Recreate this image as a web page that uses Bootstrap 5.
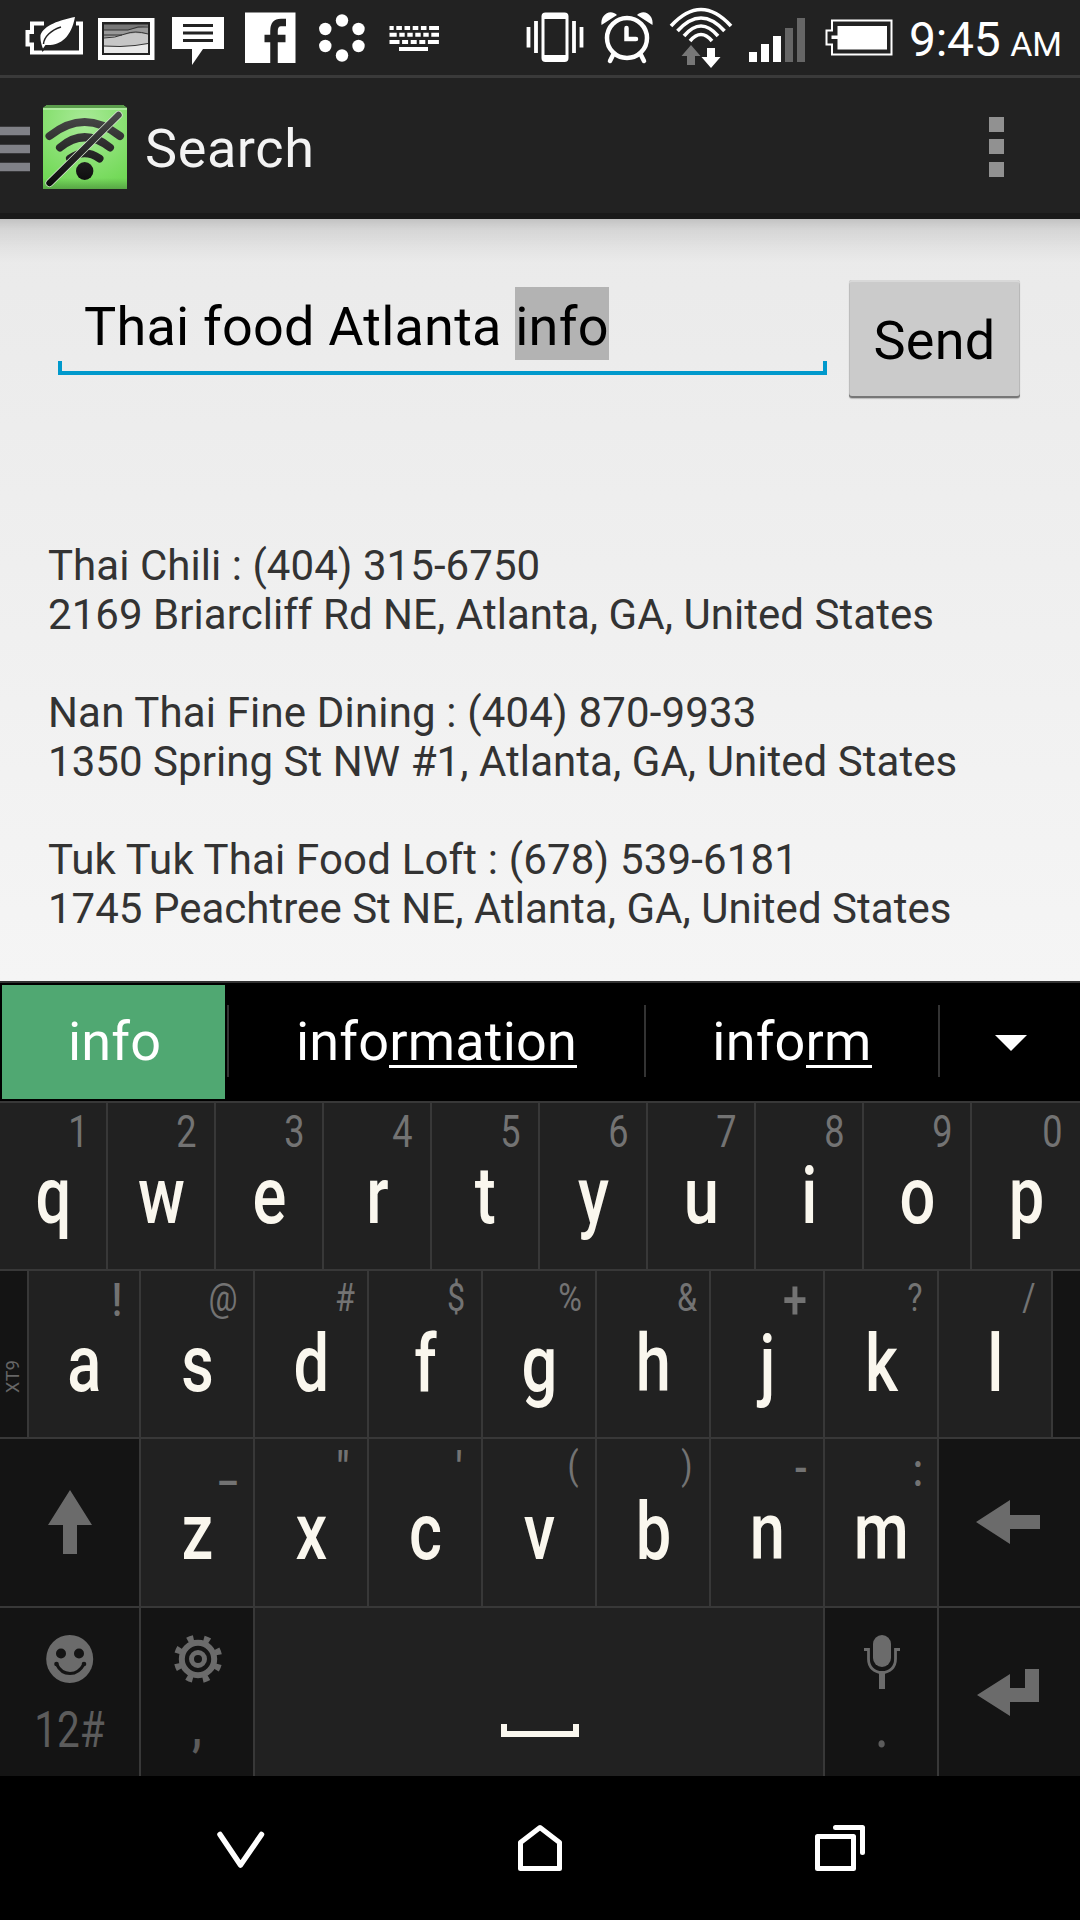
<!DOCTYPE html>
<html lang="en">
<head>
<meta charset="utf-8">
<meta name="viewport" content="width=device-width, initial-scale=1">
<title>Search</title>
<link href="https://cdn.jsdelivr.net/npm/bootstrap@5.3.0/dist/css/bootstrap.min.css" rel="stylesheet">
<style>
  body { width: 1080px; height: 1920px; overflow: hidden; background: #000; font-family: Roboto, "Liberation Sans", sans-serif; line-height: 1; }
  svg { display: block; flex: none; }
  .statusbar { height: 78px; background: #222; border-bottom: 3px solid #3a3a3a; padding-left: 24px; color: #fff; }
  .right-icons { margin-left: 66px; }
  .clock { font-size: 48px; line-height: 79px; margin-left: 7px; white-space: nowrap; letter-spacing: -.3px; }
  .ampm { font-size: 34px; margin-left: 10px; letter-spacing: -.2px; }
  .appbar { height: 141px; background: #222; border-bottom: 6px solid #1a1a1a; }
  .apptitle { font-size: 54px; color: #f3f3f3; line-height: 142px; margin-left: 15px; letter-spacing: .6px; }
  .page-area { height: 762px; background: linear-gradient(rgba(0,0,0,.17), rgba(0,0,0,.09) 10px, rgba(0,0,0,.035) 28px, rgba(0,0,0,0) 44px), linear-gradient(#eaeaea, #f5f5f5); }
  .search-row { padding: 61px 60px 0 58px; }
  .query { position: relative; width: 769px; height: 87px; margin-top: 8px; padding-left: 26px; font-size: 54px; line-height: 78px; color: #000; white-space: pre; letter-spacing: .22px; }
  .query::after { content: ""; position: absolute; left: 0; right: 0; bottom: 0; height: 14px; border: 4px solid #0099cc; border-top: 0; }
  .composing { background: #b3b3b3; padding: 8px 0 2px; }
  .send { width: 171px; height: 118px; border: 0; border-radius: 3px; background: #cbcbcb; color: #000; font-size: 54px; line-height: 117px; padding: 2px 0 0; letter-spacing: .3px; box-shadow: inset 0 -2px 0 #777, inset 0 2px 0 #d8d8d8, 0 1px 1px #bbb, inset -1px 0 #b8b8b8, inset 1px 0 #bdbdbd; }
  .results { padding: 143px 48px 0; font-size: 42px; line-height: 49px; color: #333; letter-spacing: .05px; }
  .results p { margin: 0 0 49px; white-space: nowrap; }
  .loose { letter-spacing: .16px; }
  .snug { letter-spacing: .02px; }
  .suggest { height: 122px; border-top: 2px solid #333; border-bottom: 2px solid #383838; background: #000; color: #fff; font-size: 54px; line-height: 118px; letter-spacing: .18px; }
  .pick { width: 223px; height: 114px; margin: 2px 2px 0; background: #50a872; line-height: 114px; padding-left: 2px; }
  .sep { width: 2px; height: 72px; margin-top: 22px; background: #333; }
  .ul { border-bottom: 3.500px solid #fff; display: inline-block; line-height: 54px; height: 53px; }
  .keyrow { border-bottom: 2px solid #383838; background: #212121; height: 168px; }
  .keyrow.tall { height: 169px; }
  .keyrow.last { border-bottom: 0; }
  .keycap { width: 114px; border-right: 2px solid #383838; }
  .r1 .keycap { width: 108px; }
  .r1 .keycap:last-child { border-right: 0; }
  .keycap.first { width: 112px; }
  .dark { background: #141414; }
  .hint { align-self: flex-end; width: 44px; height: 60px; font-size: 38px; line-height: 54px; color: #737373; text-align: center; transform: scaleX(.85); }
  .r1 .hint { width: 55px; font-size: 44px; line-height: 58px; transform: scaleX(.82); }
  .hint.wide { width: 60px; }
  .hint.plus { width: 56px; font-weight: 500; font-size: 54px; line-height: 58px; transform: scaleX(.8); }
  .hint.dollar { width: 50px; }
  .hint.low { width: 50px; font-weight: 500; font-size: 46px; line-height: 53px; }
  .hint.big { font-size: 46px; line-height: 58px; font-weight: 500; }
  .hint.quot { width: 48px; }
  .hint.colon { width: 38px; line-height: 62px; }
  .letter { font-size: 80px; line-height: 67px; color: #faf7ee; font-weight: 500; text-align: center; transform: scaleX(.79); height: 67px; padding-left: 1px; }
  .edgekey { width: 29px; border-right: 2px solid #383838; }
  .xt { writing-mode: vertical-rl; transform: rotate(180deg); font-size: 18px; color: #666; line-height: 26px; letter-spacing: .4px; padding-bottom: 90px; height: 168px; width: 27px; display: block; text-align: end; }
  .edgekey .xt { height: 166px; padding: 44px 0 0; text-align: start; }
  .fn { width: 141px; border-right: 2px solid #383838; }
  .navkeys { height: 144px; background: #000; }
  .alt { font-size: 50px; color: #5c5c5c; transform: scaleX(.81); line-height: 64px; text-align: center; white-space: nowrap; }
  .alt.heavy { font-weight: 700; line-height: 61px; }
  .alt.stop { font-weight: 500; font-size: 56px; line-height: 60px; padding-left: 2px; }
</style>
<script src="https://cdn.jsdelivr.net/npm/bootstrap@5.3.0/dist/js/bootstrap.bundle.min.js"></script>
</head>
<body class="d-flex flex-column m-0">

<header class="statusbar d-flex flex-shrink-0">
  <svg width="66" height="75" viewBox="24 0 66 75"><path d="M44 23.500H32V32H27.500V44.500H32V52.500H81V23.500H76" fill="none" stroke="#fff" stroke-width="4"/><path d="M75 17C60 20 44 25 40.500 35C40 41 42 46 43 48.500L45.500 45C60 46 71 38 75 17Z" fill="#fff" stroke="#222" stroke-width="3.500" paint-order="stroke"/><path d="M43.500 44C44 37 51 30 61 27" fill="none" stroke="#222" stroke-width="1.500"/></svg>
  <svg width="74" height="75" viewBox="90 0 74 75"><rect x="98" y="18" width="56.500" height="42" fill="#fff"/><rect x="102" y="22" width="48" height="33" fill="#222"/><rect x="104" y="24.500" width="44" height="28.500" fill="#777"/><path d="M104 30L128 30L148 26V53H104Z" fill="#999"/><path d="M104 37.500L135 33L148 34V53H104Z" fill="#c6c6c6"/><path d="M104 46.500L120 47L135 45L148 44V53H104Z" fill="#e8e8e8"/><path d="M104 30L128 30L138 27L148 27M104 38Q115 38 125 34T148 34M104 46L120 46.500L135 45.500L148 43.500M104 35L122 35" fill="none" stroke="#333" stroke-width="1"/></svg>
  <svg width="70" height="75" viewBox="164 0 70 75"><path d="M172 17H224V49H203L192 65V49H172Z" fill="#fff"/><path d="M183 25.500H213M183 33H213M183 40.500H213" stroke="#222" stroke-width="3"/></svg>
  <svg width="72" height="75" viewBox="234 0 72 75"><path d="M245 12.500H295.500V63H245Z" fill="#fff"/><path d="M274 63V31Q274 22.500 281 22.500H286M264.500 38.500H285.500" fill="none" stroke="#222" stroke-width="7.500"/></svg>
  <svg width="72" height="75" viewBox="306 0 72 75" fill="#fff"><circle cx="342" cy="20.500" r="6.200"/><circle cx="358.500" cy="29" r="6.200"/><circle cx="358.500" cy="46" r="6.200"/><circle cx="342" cy="55.500" r="6.200"/><circle cx="325.300" cy="46" r="6.200"/><circle cx="325.300" cy="29" r="6.200"/></svg>
  <svg width="72" height="75" viewBox="378 0 72 75" fill="none" stroke="#fff" stroke-width="4"><path d="M389.500 28H439" stroke-dasharray="4.200 2.600 5.600 2.600 5.600 2.600 5.600 2.600 5.600 2.600 9.900 9"/><path d="M389.500 34.700H439" stroke-dasharray="7.200 2.600 5.400 2.600 5.400 2.600 5.400 2.600 5.400 2.600 8 9"/><path d="M389.500 42H439" stroke-dasharray="10 2.600 6 2.600 6 2.600 6 2.600 11 9"/><path d="M399 49H428"/></svg>
  <svg class="right-icons" width="76" height="75" viewBox="516 0 76 75"><rect x="541.500" y="12.500" width="27" height="49.500" rx="4" fill="#fff"/><rect x="544.500" y="19" width="21" height="36" fill="#222"/><path d="M528.500 27V47.500M581.500 27V47.500M536 21V53M574 21V53" stroke="#fff" stroke-width="3.800"/></svg>
  <svg width="70" height="75" viewBox="592 0 70 75"><path d="M601.500 25C600 15 610 8 617 15Z M652.500 25C654 15 644 8 637 15Z" fill="#fff"/><circle cx="627" cy="38" r="20" fill="none" stroke="#fff" stroke-width="4.500"/><path d="M626.500 28V39H636" fill="none" stroke="#fff" stroke-width="4.500" stroke-linecap="round"/><path d="M613 55L610 61M641 55L644 61" stroke="#fff" stroke-width="4.500" stroke-linecap="round"/></svg>
  <svg width="78" height="75" viewBox="662 0 78 75"><g fill="none" stroke="#fff" stroke-width="3.600"><path d="M671 26Q701 -7 731 26"/><path d="M677.500 31Q701 5 724.500 31"/><path d="M684 36Q701 16 718 36"/><path d="M690 41Q701 28 712 41"/></g><path d="M691 45L700.500 56H695V65H687V56H681.500Z" fill="#777"/><path d="M711 68L720.500 57H715V48H707V57H701.500Z" fill="#fff"/></svg>
  <svg width="76" height="75" viewBox="740 0 76 75"><path d="M749 52h8v10h-8zM761 44h8v18h-8zM773 36h8v26h-8z" fill="#fff"/><path d="M785 28h8v34h-8zM797 18h8v44h-8z" fill="#666"/></svg>
  <svg width="86" height="75" viewBox="816 0 86 75"><path d="M832 20.500H891.500V54.500H832V44.500H826.500V30.500H832Z" fill="none" stroke="#fff" stroke-width="2"/><path d="M837.500 26H887V49.500H837.500V39H831.500V35.500H837.500Z" fill="#fff"/></svg>
  <span class="clock">9:45<span class="ampm">AM</span></span>
</header>

<nav class="appbar d-flex flex-shrink-0">
  <svg width="43" height="135" viewBox="0 78 43 135"><path d="M0 131H30M0 149H30M0 167H30" stroke="#808187" stroke-width="8.500"/></svg>
  <svg width="87" height="135" viewBox="43 78 87 135">
    <defs>
      <radialGradient id="tile" cx=".5" cy=".2" r=".8"><stop offset="0" stop-color="#a9ea98"/><stop offset="1" stop-color="#72d957"/></radialGradient>
      <linearGradient id="ink" gradientUnits="userSpaceOnUse" x1="0" y1="115" x2="0" y2="185"><stop offset="0" stop-color="#484848"/><stop offset="1" stop-color="#0a0a0a"/></linearGradient>
      <linearGradient id="foot" x1="0" y1="0" x2="0" y2="1"><stop offset="0" stop-color="#5aaa48" stop-opacity="0"/><stop offset="1" stop-color="#57a545"/></linearGradient>
    </defs>
    <path d="M43 108L47 105H123L127 108V189H43Z" fill="url(#tile)"/><path d="M43 108L47 105H123L127 108Z" fill="#5b9d4c"/><path d="M43 109H127" stroke="#b9efab" stroke-width="1.500"/><rect x="43" y="178" width="84" height="11" fill="url(#foot)"/>
    <g fill="none" stroke="url(#ink)" stroke-width="8" stroke-linecap="round"><path d="M49.500 136Q84.500 108 120 136"/><path d="M60 147.500Q84.500 127 110 147.500"/><path d="M70 158.500Q84.500 148 99.500 158.500"/></g>
    <ellipse cx="84.700" cy="171" rx="8.700" ry="9" fill="url(#ink)"/>
    <path d="M49.500 183L118.500 115" stroke="#d5e5d0" stroke-width="8" stroke-linecap="round"/><path d="M49.500 183L118.500 115" stroke="url(#ink)" stroke-width="6.400" stroke-linecap="round"/>
  </svg>
  <span class="apptitle">Search</span>
  <svg class="ms-auto" width="98" height="135" viewBox="982 78 98 135" fill="#919191"><path d="M989 117h15v15h-15zM989 139h15v15h-15zM989 162h15v15h-15z"/></svg>
</nav>

<main class="page-area flex-shrink-0">
  <div class="search-row d-flex justify-content-between">
    <div class="query">Thai food Atlanta <span class="composing">info</span></div>
    <button class="send" type="button">Send</button>
  </div>
  <div class="results">
    <p>Thai Chili : (404) 315-6750<br>2169 Briarcliff Rd NE, Atlanta, GA, United States</p>
    <p><span class="loose">Nan Thai Fine Dining : (404) 870-9933</span><br>1350 Spring St NW #1, Atlanta, GA, United States</p>
    <p><span class="loose">Tuk Tuk Thai Food Loft : (678) 539-6181</span><br><span class="snug">1745 Peachtree St NE, Atlanta, GA, United States</span></p>
  </div>
</main>

<section class="suggest d-flex flex-shrink-0 text-center">
  <div class="pick">info</div><div class="sep"></div>
  <div style="width:415px">info<span class="ul">rmation</span></div><div class="sep"></div>
  <div style="width:292px">info<span class="ul">rm</span></div><div class="sep"></div>
  <svg width="140" height="118" viewBox="940 983 140 118"><path d="M995 1035H1027L1011 1051Z" fill="#fff"/></svg>
</section>

<section class="flex-shrink-0">
  <div class="keyrow r1 d-flex">
    <div class="keycap d-flex flex-column"><span class="hint">1</span><span class="letter">q</span></div>
    <div class="keycap d-flex flex-column"><span class="hint">2</span><span class="letter">w</span></div>
    <div class="keycap d-flex flex-column"><span class="hint">3</span><span class="letter">e</span></div>
    <div class="keycap d-flex flex-column"><span class="hint">4</span><span class="letter">r</span></div>
    <div class="keycap d-flex flex-column"><span class="hint">5</span><span class="letter">t</span></div>
    <div class="keycap d-flex flex-column"><span class="hint">6</span><span class="letter">y</span></div>
    <div class="keycap d-flex flex-column"><span class="hint">7</span><span class="letter">u</span></div>
    <div class="keycap d-flex flex-column"><span class="hint">8</span><span class="letter">i</span></div>
    <div class="keycap d-flex flex-column"><span class="hint">9</span><span class="letter">o</span></div>
    <div class="keycap d-flex flex-column"><span class="hint">0</span><span class="letter">p</span></div>
  </div>
  <div class="keyrow d-flex">
    <div class="edgekey dark"><span class="xt">XT9</span></div>
    <div class="keycap first d-flex flex-column"><span class="hint big">!</span><span class="letter">a</span></div>
    <div class="keycap d-flex flex-column"><span class="hint wide">@</span><span class="letter">s</span></div>
    <div class="keycap d-flex flex-column"><span class="hint">#</span><span class="letter">d</span></div>
    <div class="keycap d-flex flex-column"><span class="hint dollar">$</span><span class="letter">f</span></div>
    <div class="keycap d-flex flex-column"><span class="hint dollar">%</span><span class="letter">g</span></div>
    <div class="keycap d-flex flex-column"><span class="hint">&amp;</span><span class="letter">h</span></div>
    <div class="keycap d-flex flex-column"><span class="hint plus">+</span><span class="letter">j</span></div>
    <div class="keycap d-flex flex-column"><span class="hint">?</span><span class="letter">k</span></div>
    <div class="keycap d-flex flex-column"><span class="hint">/</span><span class="letter">l</span></div>
    <div class="dark flex-fill"></div>
  </div>
  <div class="keyrow tall d-flex">
    <div class="fn dark"><svg width="139" height="167" viewBox="0 1439 139 167"><path d="M70 1490L92 1525H77V1554H63V1525H48Z" fill="#6b6b6b"/></svg></div>
    <div class="keycap d-flex flex-column"><span class="hint low">_</span><span class="letter">z</span></div>
    <div class="keycap d-flex flex-column"><span class="hint big quot">"</span><span class="letter">x</span></div>
    <div class="keycap d-flex flex-column"><span class="hint big">'</span><span class="letter">c</span></div>
    <div class="keycap d-flex flex-column"><span class="hint">(</span><span class="letter">v</span></div>
    <div class="keycap d-flex flex-column"><span class="hint">)</span><span class="letter">b</span></div>
    <div class="keycap d-flex flex-column"><span class="hint big">-</span><span class="letter">n</span></div>
    <div class="keycap d-flex flex-column"><span class="hint big colon">:</span><span class="letter">m</span></div>
    <div class="dark flex-fill"><svg width="141" height="167" viewBox="939 1439 141 167"><path d="M976 1522L1010 1500V1515H1040V1529H1010V1544Z" fill="#6b6b6b"/></svg></div>
  </div>
  <div class="keyrow last d-flex">
    <div class="fn dark">
      <svg width="139" height="90" viewBox="0 1608 139 90"><ellipse cx="69.700" cy="1659" rx="23.500" ry="24" fill="#6b6b6b"/><circle cx="61" cy="1653.500" r="5" fill="#141414"/><circle cx="79" cy="1653.500" r="5" fill="#141414"/><path d="M56.500 1664Q61 1673.500 70 1673.500T84 1664" fill="none" stroke="#141414" stroke-width="3"/><circle cx="56.500" cy="1664" r="2.300" fill="#141414"/><circle cx="84" cy="1664" r="2.300" fill="#141414"/></svg>
      <div class="alt">12#</div>
    </div>
    <div class="keycap dark">
      <svg width="112" height="90" viewBox="141 1608 112 90" fill="none" stroke="#6b6b6b"><circle cx="198" cy="1659" r="16.200" stroke-width="6"/><circle cx="198" cy="1659" r="6.500" stroke-width="5"/><circle cx="198" cy="1659" r="21.300" stroke-width="6" stroke-dasharray="6.200 10.529" stroke-dashoffset="-5.300"/></svg>
      <div class="alt heavy">,</div>
    </div>
    <div class="keycap" style="width:570px"><svg width="568" height="168" viewBox="255 1608 568 168"><path d="M504 1724V1734H576V1724" fill="none" stroke="#faf7ee" stroke-width="6"/></svg></div>
    <div class="keycap dark">
      <svg width="112" height="90" viewBox="825 1608 112 90"><rect x="873" y="1635" width="18" height="32" rx="9" fill="#6b6b6b"/><path d="M864 1649.500H868.500V1659C868.500 1667 874 1672.500 882 1672.500S895.500 1667 895.500 1659V1649.500H900" fill="none" stroke="#6b6b6b" stroke-width="2.800"/><path d="M882 1672V1689" stroke="#6b6b6b" stroke-width="6"/></svg>
      <div class="alt stop">.</div>
    </div>
    <div class="dark flex-fill"><svg width="141" height="168" viewBox="939 1608 141 168"><path d="M977 1695L1010 1674V1688H1025V1669H1039V1702H1010V1716Z" fill="#6b6b6b"/></svg></div>
  </div>
</section>

<footer class="navkeys flex-shrink-0 d-flex">
  <svg width="390" height="144" viewBox="0 1776 390 144"><path d="M220 1834.500L240.500 1865L261.500 1834.500" fill="none" stroke="#fff" stroke-width="5.500" stroke-linecap="round" stroke-linejoin="round"/></svg>
  <svg width="300" height="144" viewBox="390 1776 300 144"><path d="M520.500 1842.500L540 1827.500L559.500 1842.500V1868.500H520.500Z" fill="none" stroke="#fff" stroke-width="5" stroke-linejoin="round"/></svg>
  <svg width="390" height="144" viewBox="690 1776 390 144"><path d="M817.500 1836.500H853.500V1868.500H817.500ZM835.500 1827.500H862.500V1852.500" fill="none" stroke="#fff" stroke-width="5" stroke-linecap="round" stroke-linejoin="round"/></svg>
</footer>
</body>
</html>
